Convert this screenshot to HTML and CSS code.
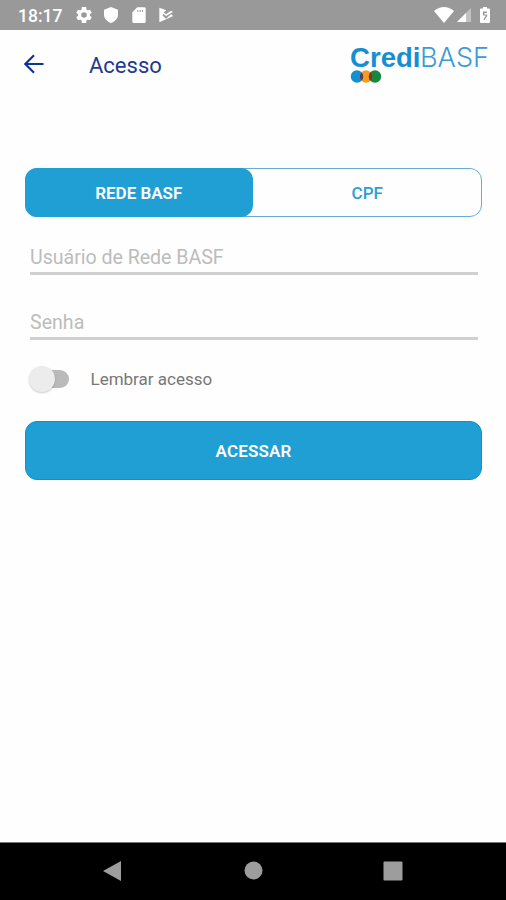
FILE: index.html
```html
<!DOCTYPE html>
<html lang="pt-BR">
<head>
<meta charset="utf-8">
<title>Acesso</title>
<link rel="stylesheet" href="styles.css">
</head>
<body>
<div class="screen">
  <div class="status">
    <span class="clock">18:17</span>
    <svg class="st-icon" viewBox="2 2 20 20"><path fill-rule="evenodd" d="M19.400 13c.1-.7.1-1.300 0-2l2.300-1.700-2.200-3.900-2.700 1.100c-.5-.4-1.100-.7-1.700-1L14.700 2H9.300l-.4 3.500c-.6.300-1.200.6-1.700 1L4.500 5.400 2.300 9.300 4.600 11c-.1.700-.1 1.300 0 2l-2.300 1.700 2.200 3.900 2.700-1.100c.5.400 1.100.7 1.700 1l.4 3.500h5.400l.4-3.500c.6-.3 1.200-.6 1.700-1l2.700 1.100 2.200-3.900zM12 8.500a3.500 3.500 0 1 1 0 7 3.500 3.500 0 0 1 0-7z"/></svg>
    <svg class="st-icon" viewBox="0 0 24 24"><path d="M12 0 1.500 4v8c0 5.500 5 10 10.500 12C17.500 22 22.500 17.500 22.500 12V4z"/></svg>
    <svg class="st-icon" viewBox="0 0 24 24"><path fill-rule="evenodd" d="M20 .5H9.500L2 8v14a2 2 0 0 0 2 2H20a2 2 0 0 0 2-2V2.500a2 2 0 0 0-2-2zM9.500 4.500H11v3H9.500zm3.500 0h1.500v3H13zM16.500 4.500H18v3h-1.500z"/></svg>
    <svg class="st-icon" viewBox="0 0 24 24"><path d="M2 1v22l21-9.500-3.500-2.500-7.500 6.500-5.500-5 2-2 3.500 3L22.500 7.500 19.500 5.500 12 11 8.500 8l4-3z"/></svg>
    <svg class="wifi" viewBox="0 0 20 16"><path d="M0 4Q10-4 20 4L10 16z"/></svg>
    <svg class="signal" viewBox="0 0 16 16"><path d="M15 1v14H1z" opacity=".4"/><path d="M10 6v9H1z"/></svg>
    <svg class="battery" viewBox="0 0 10 16"><path fill-rule="evenodd" d="M3 0h4v1.500h2a1 1 0 0 1 1 1V15a1 1 0 0 1-1 1H1a1 1 0 0 1-1-1V2.500a1 1 0 0 1 1-1h2zM3 4.500v4h2.800L3.500 12.500l1 .8L7.200 9V7.500H4.500V6H7V4.500z"/></svg>
  </div>
  <header class="bar">
    <svg class="back" viewBox="0 0 20 20"><path d="M19.500 10H1.500M10 1.300 1.300 10l8.700 8.700"/></svg>
    <h1 class="title">Acesso</h1>
    <svg class="logo" viewBox="0 0 140 42">
      <text class="logo-bold" x="0" y="23" textLength="70.500" lengthAdjust="spacingAndGlyphs">Credi</text>
      <text class="logo-thin" x="70" y="23" textLength="69" lengthAdjust="spacingAndGlyphs">BASF</text>
      <circle cx="7" cy="32.500" r="6.200" fill="#168ed2"/>
      <circle cx="16" cy="32.500" r="6.200" fill="#f79b20"/>
      <circle cx="25" cy="32.500" r="6.200" fill="#168a3c"/>
      <path d="M11.500 28.200a6.200 6.200 0 0 1 0 8.600 6.200 6.200 0 0 1 0-8.600z" fill="#4b4260"/>
      <path d="M20.500 28.200a6.200 6.200 0 0 1 0 8.600 6.200 6.200 0 0 1 0-8.600z" fill="#8c2f1c"/>
    </svg>
  </header>
  <main class="form">
    <div class="tabs">
      <div class="tab active"><span>REDE BASF</span></div>
      <div class="tab"><span>CPF</span></div>
    </div>
    <div class="field user"><span>Usuário de Rede BASF</span></div>
    <div class="field pass"><span>Senha</span></div>
    <div class="remember">
      <div class="switch"><div class="knob"></div></div>
      <span class="label">Lembrar acesso</span>
    </div>
    <div class="submit"><span>ACESSAR</span></div>
  </main>
  <nav class="nav">
    <svg viewBox="0 0 20 22"><path d="M18 1v20L0 11z"/></svg>
    <svg viewBox="0 0 20 22"><circle cx="10.500" cy="10.500" r="9"/></svg>
    <svg viewBox="0 0 20 22"><rect x=".5" y="1.500" width="19" height="19" rx="1"/></svg>
  </nav>
</div>
</body>
</html>
```
FILE: styles.css
```css
* { box-sizing: border-box; }
body { margin: 0; background: #fefefe; font-family: Roboto, sans-serif; }
.screen { width: 506px; height: 900px; display: flex; flex-direction: column; overflow: hidden; }
.status { height: 30px; flex: none; background: #999; display: flex; align-items: center; padding: 0 16px 0 18px; fill: #fff; }
.clock { width: 58px; color: #fff; font-size: 17.500px; font-weight: 500; line-height: 30px; padding-top: 1px; white-space: nowrap; }
.st-icon { width: 16px; height: 16px; margin-right: 11.300px; }
.wifi { width: 20px; height: 16px; margin-left: auto; }
.signal { width: 16px; height: 16px; margin: 0 8px 0 2px; }
.battery { width: 10px; height: 16px; }
.bar { height: 138px; flex: none; display: flex; align-items: flex-start; padding: 14px 16px 0 24px; }
.back { width: 20px; height: 20px; margin-top: 10px; fill: none; stroke: #0d3594; stroke-width: 2.200; }
.title { margin: 8px 0 0 45px; font-size: 22px; font-weight: 400; line-height: 28px; letter-spacing: 0; color: #223a8f; }
.logo { width: 140px; height: 42px; margin-left: auto; overflow: visible; }
.logo-bold { font: bold 27.500px "Liberation Sans", sans-serif; fill: #168ed2; }
.logo-thin { font: 300 26.500px Inter, sans-serif; fill: #3a9bd6; }
.form { flex: 1; padding: 0 24px 0 25px; display: flex; flex-direction: column; }
.tabs { height: 49px; flex: none; border: 1px solid #65add8; border-radius: 12px; display: flex; }
.tab { flex: 1; display: flex; align-items: center; justify-content: center; color: #2b9fd2; font-size: 17px; font-weight: 500; padding: 1px 0 0 2px; }
.tab.active { background: #209fd4; color: #fff; border-radius: 12px; margin: -1px; padding-left: 0; font-weight: 600; }
.field { margin: 0 4px 0 5px; border-bottom: 3px solid #d0d0d0; color: #bcbcbc; font-size: 19.600px; line-height: 24px; flex: none; }
.user { height: 58px; padding-top: 29px; letter-spacing: -.03px; }
.pass { height: 65px; padding-top: 36px; }
.remember { height: 81px; flex: none; display: flex; align-items: center; padding: 0 0 3px 4px; }
.switch { width: 40px; height: 18px; flex: none; display: flex; align-items: center; border-radius: 9px; background: linear-gradient(90deg, transparent 13px, #bababa 13px); }
.knob { width: 26px; height: 26px; flex: none; border-radius: 50%; background: #ececec; box-shadow: 0 1px 2px rgba(0,0,0,.2); }
.label { margin-left: 21.500px; color: #777; font-size: 17px; letter-spacing: 0; }
.submit { height: 59px; flex: none; background: #209fd4; border: 1px solid #0b92cc; border-radius: 12px; color: #fff; display: flex; align-items: center; justify-content: center; font-size: 17px; font-weight: 600; letter-spacing: .15px; padding-top: 1px; }
.nav { height: 58px; flex: none; background: #000; border-top: 1px solid #777; display: flex; justify-content: space-between; padding: 17px 103px 0; fill: #9d9d9d; }
.nav svg { width: 20px; height: 22px; }
```
